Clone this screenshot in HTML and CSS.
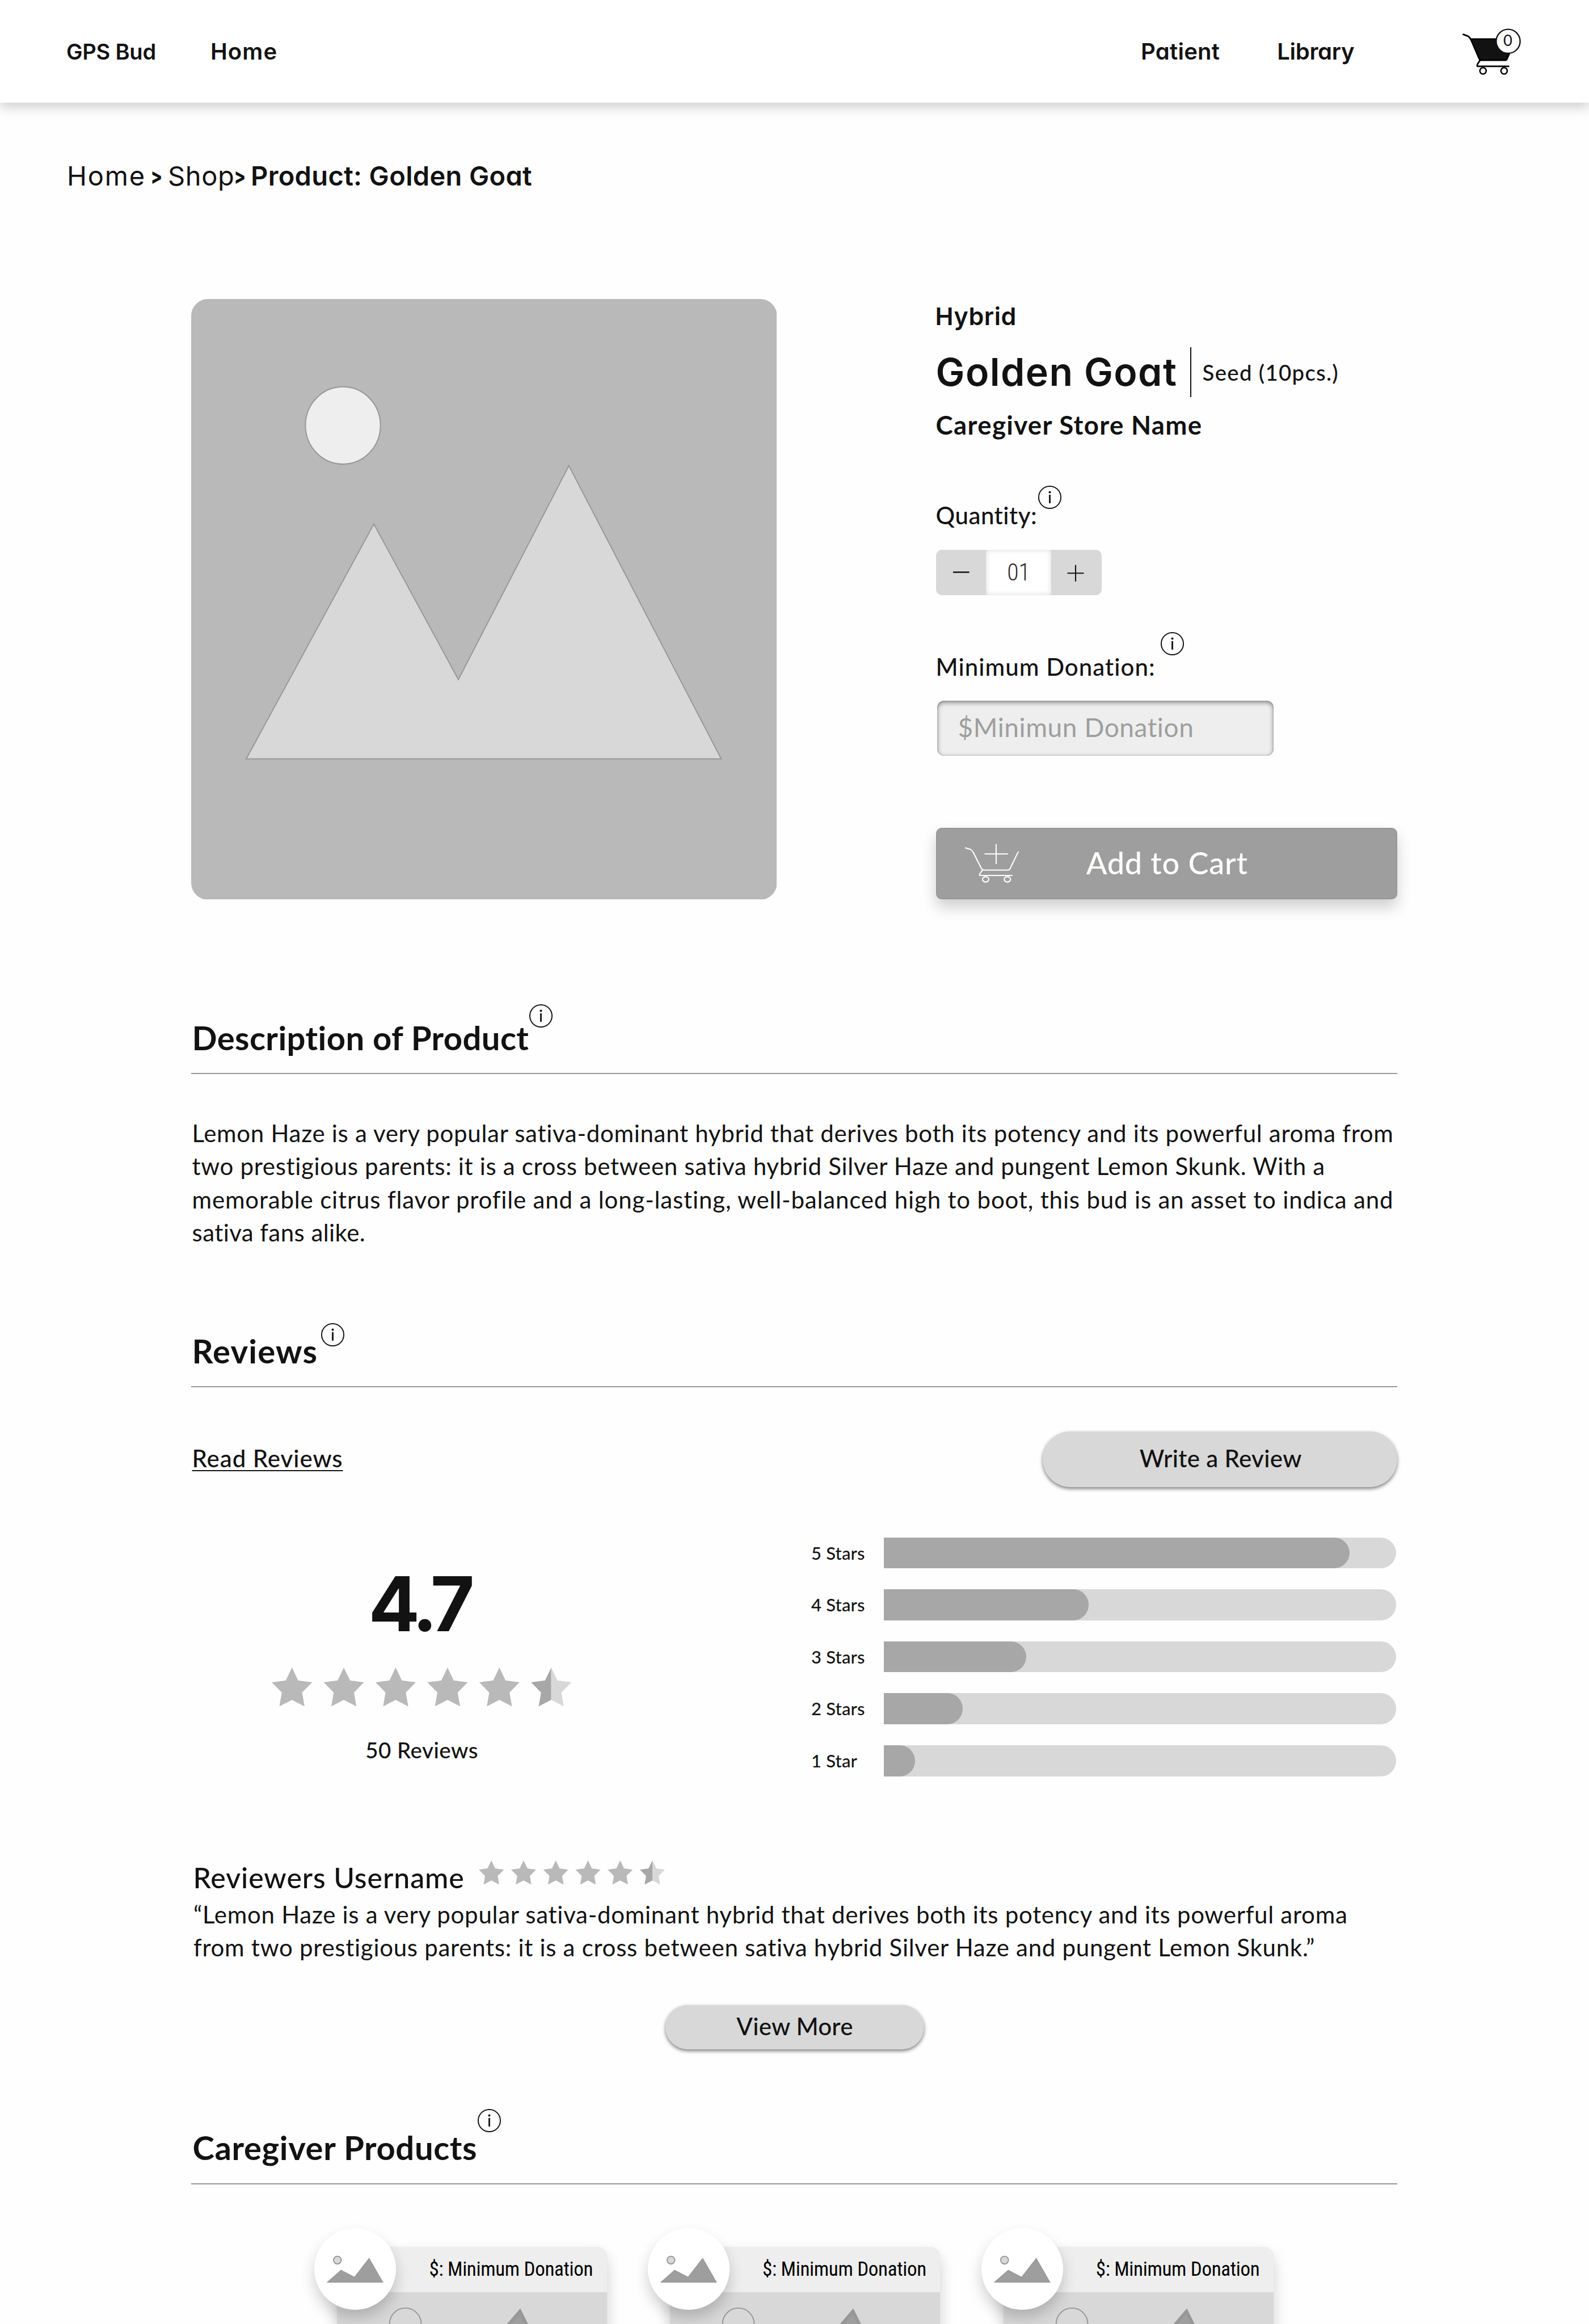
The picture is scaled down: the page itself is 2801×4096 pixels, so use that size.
FILE: index.html
```html
<!DOCTYPE html>
<html lang="en">
<head>
<meta charset="utf-8">
<title>GPS Bud – Golden Goat</title>
<link rel="stylesheet" href="styles.css">
</head>
<body>
<svg class="defs" aria-hidden="true">
  <symbol id="info" viewBox="0 0 66 66">
    <circle cx="33" cy="33" r="30" fill="none" stroke="#121212" stroke-width="3"/>
    <circle cx="33" cy="19.3" r="3.1" fill="#121212"/>
    <path d="M33 26v23" stroke="#121212" stroke-width="4.4"/>
  </symbol>
  <symbol id="stars" viewBox="0 0 816 105.8">
    <g fill="#b9b9b9">
      <path id="star" d="M55 0L71.8 35L109.8 40.2L82.6 67.7L89.2 105.6L55 87.8L20.8 105.6L27.4 67.7L.2 40.2L38.2 35Z"/>
      <use href="#star" x="141"/>
      <use href="#star" x="282"/>
      <use href="#star" x="423"/>
      <use href="#star" x="564"/>
    </g>
    <path fill="#a7a7a7" d="M760 0V87.8L725.8 105.6L732.4 67.7L705.2 40.2L743.2 35Z"/>
    <path fill="#d8d8d8" d="M760 0L776.8 35L814.8 40.2L787.6 67.7L794.2 105.6L760 87.8Z"/>
  </symbol>
  <symbol id="avatar" viewBox="0 0 222 222">
    <circle cx="62.8" cy="87" r="10.5" fill="#d8d8d8" stroke="#979797" stroke-width="3"/>
    <path d="M36 147L72.8 114.5L109.3 133.5L149 82.5L186 147Z" fill="#9e9e9e" stroke="#979797" stroke-width="2"/>
  </symbol>
  <symbol id="thumb" viewBox="0 0 734.6 400">
    <circle cx="186" cy="86" r="43" fill="none" stroke="#979797" stroke-width="3"/>
    <path d="M60 340L230 190L310 270L497.5 52L640 340Z" fill="#9e9e9e" stroke="#979797" stroke-width="9"/>
  </symbol>
</svg>

<header class="topbar">
  <nav class="links">
    <a class="brand">GPS Bud</a>
    <a class="home">Home</a>
  </nav>
  <nav class="links right">
    <a class="patient">Patient</a>
    <a class="library">Library</a>
    <svg class="cart" viewBox="3974 76 162 130">
      <path d="M3998 106.7H4121L4095 164H4022.5Z" fill="#121212"/>
      <path d="M3977.6 94L3990 98.4Q3995 101 3999 109L4021 160Q4022.5 164 4026 164H4091.5Q4095 164 4096.3 161L4120 106.7H3998M4022.5 165.5Q4015 175.5 4015.3 179.5Q4015.5 180.7 4017 180.7H4101" fill="none" stroke="#000" stroke-width="4.4" stroke-linecap="round" stroke-linejoin="round"/>
      <circle cx="4031.4" cy="193" r="8.6" fill="#fff" stroke="#000" stroke-width="4"/>
      <circle cx="4088.7" cy="193" r="8.6" fill="#fff" stroke="#000" stroke-width="4"/>
      <circle cx="4099.7" cy="112.7" r="32.6" fill="#fff" stroke="#121212" stroke-width="3.6"/>
      <text class="count" x="4098.7" y="125" text-anchor="middle">0</text>
    </svg>
  </nav>
</header>

<div class="crumbs">
  <a class="c-home">Home</a><span class="sep s1"><i>&gt;</i></span><a class="c-shop">Shop</a><span class="sep s2"><i>&gt;</i></span><b>Product: Golden Goat</b>
</div>

<main class="page">
  <section class="hero">
    <svg class="photo" viewBox="519 812.5 1592.7 1632.8">
      <rect x="519" y="812.5" width="1592.7" height="1632.8" rx="45.5" fill="#b9b9b9"/>
      <ellipse cx="931.6" cy="1156.2" rx="102" ry="105" fill="#eee" stroke="#979797" stroke-width="3"/>
      <path d="M668.7 2062.6L1015.6 1424L1245.4 1846.9L1545.8 1265.7L1960 2062.6Z" fill="#d8d8d8" stroke="#979797" stroke-width="3"/>
    </svg>
    <div class="details">
      <div class="strain">Hybrid</div>
      <div class="title-row">
        <h1>Golden Goat</h1>
        <span class="divider"></span>
        <span class="seed">Seed (10pcs.)</span>
      </div>
      <div class="store">Caregiver Store Name</div>
      <div class="label l-qty"><span>Quantity:</span><svg class="info"><use href="#info"/></svg></div>
      <div class="stepper">
        <svg class="step" viewBox="0 0 88.6 80"><path d="M30 39.5H58.6" stroke="#121212" stroke-width="2.4"/></svg>
        <span class="value">01</span>
        <svg class="step" viewBox="0 0 88.6 80"><path d="M28.5 41.3H57.5M43 26.8V55.8" stroke="#121212" stroke-width="2.1"/></svg>
      </div>
      <div class="label l-min"><span>Minimum Donation:</span><svg class="info"><use href="#info"/></svg></div>
      <div class="input">$Minimun Donation</div>
      <div class="add">
        <svg class="add-icon" viewBox="2622 2294 150 110" fill="none" stroke="#fffdfb" stroke-width="3.3" stroke-linecap="round" stroke-linejoin="round">
          <path d="M2625 2307L2638 2310.8Q2643 2313.5 2646 2319L2668.5 2363.5Q2670.5 2367.3 2676 2367.3H2741Q2744 2367.3 2745.8 2364L2768.3 2317.7"/>
          <path d="M2671 2368Q2663 2377 2663 2380.5Q2663.2 2382 2665 2382H2751.7M2708.3 2297.5V2349.5M2678 2323.3H2739"/>
          <ellipse cx="2679.7" cy="2392.5" rx="8.6" ry="7.3"/>
          <ellipse cx="2738.7" cy="2392.5" rx="8.6" ry="7.3"/>
        </svg>
        <span>Add to Cart</span>
      </div>
    </div>
  </section>

  <h2 class="h-desc"><span>Description of Product</span><svg class="info"><use href="#info"/></svg></h2>
  <p class="desc">
    <span class="d1">Lemon Haze is a very popular sativa-dominant hybrid that derives both its potency and its powerful aroma from</span>
    <span class="d2">two prestigious parents: it is a cross between sativa hybrid Silver Haze and pungent Lemon Skunk. With a</span>
    <span class="d3">memorable citrus flavor profile and a long-lasting, well-balanced high to boot, this bud is an asset to indica and</span>
    <span class="d4">sativa fans alike.</span>
  </p>

  <h2 class="h-rev"><span>Reviews</span><svg class="info"><use href="#info"/></svg></h2>
  <div class="actions">
    <a class="read">Read Reviews</a>
    <div class="pill write">Write a Review</div>
  </div>

  <section class="summary">
    <div class="score">
      <div class="num">4.7</div>
      <svg class="stars big"><use href="#stars"/></svg>
      <div class="total">50 Reviews</div>
    </div>
    <div class="bars">
      <span>5 Stars</span><div class="track"><div class="fill" style="width:90.9%"></div></div>
      <span>4 Stars</span><div class="track"><div class="fill" style="width:40%"></div></div>
      <span>3 Stars</span><div class="track"><div class="fill" style="width:27.8%"></div></div>
      <span>2 Stars</span><div class="track"><div class="fill" style="width:15.4%"></div></div>
      <span>1 Star</span><div class="track"><div class="fill" style="width:6.1%"></div></div>
    </div>
  </section>

  <div class="reviewer"><span>Reviewers Username</span><svg class="stars small"><use href="#stars"/></svg></div>
  <p class="quote">“Lemon Haze is a very popular sativa-dominant hybrid that derives both its potency and its powerful aroma<br>from two prestigious parents: it is a cross between sativa hybrid Silver Haze and pungent Lemon Skunk.”</p>
  <div class="pill more">View More</div>

  <h2 class="h-prod"><span>Caregiver Products</span><svg class="info"><use href="#info"/></svg></h2>
  <div class="cards">
    <article class="card">
      <div class="price">$: Minimum Donation</div>
      <svg class="thumb"><use href="#thumb"/></svg>
      <div class="avatar"><svg><use href="#avatar"/></svg></div>
    </article>
    <article class="card">
      <div class="price">$: Minimum Donation</div>
      <svg class="thumb"><use href="#thumb"/></svg>
      <div class="avatar"><svg><use href="#avatar"/></svg></div>
    </article>
    <article class="card">
      <div class="price">$: Minimum Donation</div>
      <svg class="thumb"><use href="#thumb"/></svg>
      <div class="avatar"><svg><use href="#avatar"/></svg></div>
    </article>
  </div>
</main>
</body>
</html>
```
FILE: styles.css
```css
* { box-sizing: border-box; }
html { height: 4096px; overflow: hidden; }
body {
  margin: 0;
  height: 4096px;
  overflow: hidden;
  background: #fefefe;
  color: #121212;
  font-family: Lato, "Open Sans", sans-serif;
  white-space: nowrap;
}
svg { display: block; flex: none; }
.defs { position: absolute; width: 0; height: 0; }
h1, h2, p { margin: 0; }

/* top bar */
.topbar {
  display: flex;
  justify-content: space-between;
  align-items: center;
  height: 181px;
  padding: 1.5px 119.3px 0 117px;
  background: #fff;
  box-shadow: 0 8px 19px rgba(0, 0, 0, .19);
}
.links {
  display: flex;
  align-items: center;
  font: 600 40px/60px Inter, sans-serif;
  font-feature-settings: "cv11";
}
.brand { font-size: 38px; letter-spacing: -.2px; }
.home { margin-left: 96px; letter-spacing: 1.1px; }
.patient { letter-spacing: .28px; }
.library { margin-left: 101px; letter-spacing: -.3px; }
.cart { width: 105px; height: 84.3px; margin-left: 189.5px; }
.count { font: 400 42px Lato, sans-serif; fill: #121212; }

/* breadcrumb */
.crumbs {
  display: flex;
  margin: 99.4px 0 0 118px;
  font: 400 47px/60px Inter, sans-serif;
  font-feature-settings: "cv11";
}
.crumbs b { margin-left: 8px; font-weight: 600; letter-spacing: .35px; }
.c-home { width: 138px; letter-spacing: 1.8px; }
.c-shop { width: 116px; letter-spacing: .6px; }
.sep { display: flex; justify-content: center; font-size: 38px; font-weight: 800; }
.sep i { font-style: normal; transform: scaleX(.78); }
.s1 { width: 40px; }
.s2 { width: 22px; }

.page { padding: 0 338px 0 336.5px; }

/* product hero */
.hero { display: flex; justify-content: space-between; margin-top: 186.4px; }
.photo { width: 1032.7px; height: 1058.7px; }
.details { width: 813.4px; padding-top: 5.1px; }
.strain {
  margin-left: -1px;
  font: 600 43px/50px Inter, sans-serif;
  letter-spacing: .5px;
}
.title-row { display: flex; align-items: center; height: 87.5px; margin-top: 30.6px; }
.title-row h1 {
  width: 422px;
  font: 600 68px/87.5px Inter, sans-serif;
  font-feature-settings: "cv11";
  letter-spacing: 1.4px;
}
.divider { width: 2px; height: 87.5px; margin: 0 20px 0 26px; background: #121212; }
.seed { font-size: 38.4px; font-weight: 500; line-height: 60px; letter-spacing: 1.29px; }
.store { margin: 18.7px 0 0 0; font-size: 45.6px; font-weight: 700; line-height: 60px; letter-spacing: 1.32px; }
.label { display: flex; align-items: flex-start; height: 60px; font-size: 42px; font-weight: 500; line-height: 60px; }
.label span, h2 span { padding-top: 1px; }
.info { width: 43px; height: 43px; }
.l-qty { margin-top: 98.7px; letter-spacing: .48px; }
.l-qty .info { margin: -22.5px 0 0 .7px; }
.l-min { margin-top: 95.3px; letter-spacing: 1.03px; }
.l-min .info { margin: -30.5px 0 0 8px; }

.stepper {
  display: flex;
  width: 292px;
  height: 80px;
  margin-top: 31.3px;
  border-radius: 10px;
  overflow: hidden;
  background: #d8d8d8;
}
.step { width: 88.6px; height: 80px; }
.value {
  flex: 1;
  background: #fff;
  box-shadow: inset 0 0 10px rgba(0, 0, 0, .16);
  font: 300 42px/80px "Roboto Condensed", Roboto, sans-serif;
  text-align: center;
  color: #32262e;
}
.input {
  width: 593px;
  height: 97.3px;
  margin: 31px 0 0 2.3px;
  padding: 0 0 4px 36.5px;
  border-radius: 12px;
  background: #eee;
  box-shadow: inset 0 3px 8px rgba(0, 0, 0, .45), inset 0 0 3px rgba(0, 0, 0, .2);
  font-size: 46px;
  line-height: 94px;
  letter-spacing: .59px;
  color: #9e9e9e;
}
.add {
  display: flex;
  align-items: center;
  height: 126.5px;
  margin-top: 126.5px;
  padding-left: 48.8px;
  border: 2px solid #979797;
  border-radius: 10px;
  background: #9e9e9e;
  box-shadow: 0 14px 26px rgba(0, 0, 0, .19);
}
.add-icon { width: 97.3px; height: 71.3px; }
.add span {
  margin-left: 117px;
  padding-bottom: 2px;
  font-size: 54px;
  font-weight: 500;
  line-height: 70px;
  letter-spacing: .78px;
  color: #fffdfb;
}

/* section headings */
h2 {
  display: flex;
  align-items: flex-start;
  border-bottom: 2px solid #979797;
  font-size: 58px;
  font-weight: 700;
  line-height: 70px;
}
.h-desc { height: 99.5px; margin-top: 207.6px; padding-left: 2px; letter-spacing: .42px; }
.h-desc .info { margin-top: -24.2px; }
.h-rev { height: 100.1px; margin-top: 143.5px; padding-left: 2px; letter-spacing: 1.2px; }
.h-rev .info { margin: -13.8px 0 0 5px; }
.h-prod { height: 100.6px; margin-top: 136.7px; padding-left: 3px; letter-spacing: .63px; }
.h-prod .info { margin-top: -33.2px; }

.desc { margin: 75.2px 0 0 2px; font-size: 42px; line-height: 58.4px; }
.desc span { display: block; }
.d1 { letter-spacing: .7px; }
.d2 { letter-spacing: .67px; }
.d3 { letter-spacing: .84px; }
.d4 { letter-spacing: .44px; }

/* reviews */
.actions { display: flex; justify-content: space-between; align-items: center; margin-top: 77.6px; }
.read {
  margin-left: 2px;
  padding-bottom: 4px;
  font-size: 42px;
  font-weight: 500;
  line-height: 60px;
  letter-spacing: .95px;
  text-decoration: underline;
  text-decoration-thickness: 2.4px;
  text-underline-offset: 5.4px;
  text-decoration-skip-ink: none;
}
.pill {
  border-radius: 50px;
  background: #d8d8d8;
  box-shadow: 0 3px 6px rgba(0, 0, 0, .5);
  font-size: 42px;
  font-weight: 500;
  text-align: center;
}
.write { width: 624.6px; height: 98px; padding-left: 2px; line-height: 95px; letter-spacing: .35px; }
.more { width: 456.7px; height: 78px; margin: 72.7px 0 0 836.2px; line-height: 74px; letter-spacing: .26px; }

.summary { display: flex; margin-top: 89px; }
.score { display: flex; flex-direction: column; align-items: center; width: 814px; padding-top: 49.8px; }
.num { padding-right: 10px; font: 700 134px/134px Inter, sans-serif; letter-spacing: -9.2px; }
.stars.big { width: 529px; height: 68.6px; margin-top: 45.7px; }
.total { margin-top: 51.2px; font-size: 38.5px; font-weight: 500; line-height: 50px; letter-spacing: .49px; }
.bars {
  display: grid;
  grid-template-columns: 128.4px 902.6px;
  grid-auto-rows: 54.6px;
  row-gap: 37.05px;
  margin-left: 279.5px;
  font-size: 31px;
  font-weight: 500;
  line-height: 54.6px;
  letter-spacing: .17px;
}
.track, .fill { height: 54.6px; border-radius: 0 27.3px 27.3px 0; }
.track { background: #d8d8d8; }
.fill { background: #a7a7a7; }

.reviewer { display: flex; margin: 143px 0 0 4px; font-size: 50px; font-weight: 500; line-height: 70px; letter-spacing: .95px; }
.stars.small { width: 328.6px; height: 42.6px; margin: 5.5px 0 0 24.8px; }
.quote { margin: 1.4px 0 0 4.5px; font-size: 42px; line-height: 58.3px; letter-spacing: .72px; }

/* product cards */
.cards { display: flex; gap: 111.3px; margin-top: 110.3px; padding-left: 257px; }
.card {
  position: relative;
  flex: none;
  width: 476.3px;
  border-radius: 18px;
  background: #d8d8d8;
  box-shadow: 0 14px 26px rgba(0, 0, 0, .19);
}
.price {
  height: 79.7px;
  padding-left: 163px;
  border-radius: 18px 18px 0 0;
  background: #eee;
  font: 400 35px/80px "Roboto Condensed", Roboto, sans-serif;
  letter-spacing: -.32px;
  color: #000;
}
.thumb { width: 476.3px; height: 259.4px; }
.avatar {
  position: absolute;
  left: -39.2px;
  top: -33.1px;
  width: 144px;
  height: 144px;
  border-radius: 50%;
  background: #fff;
  box-shadow: 0 14px 26px rgba(0, 0, 0, .19);
}
.avatar svg { width: 144px; height: 144px; }
```
